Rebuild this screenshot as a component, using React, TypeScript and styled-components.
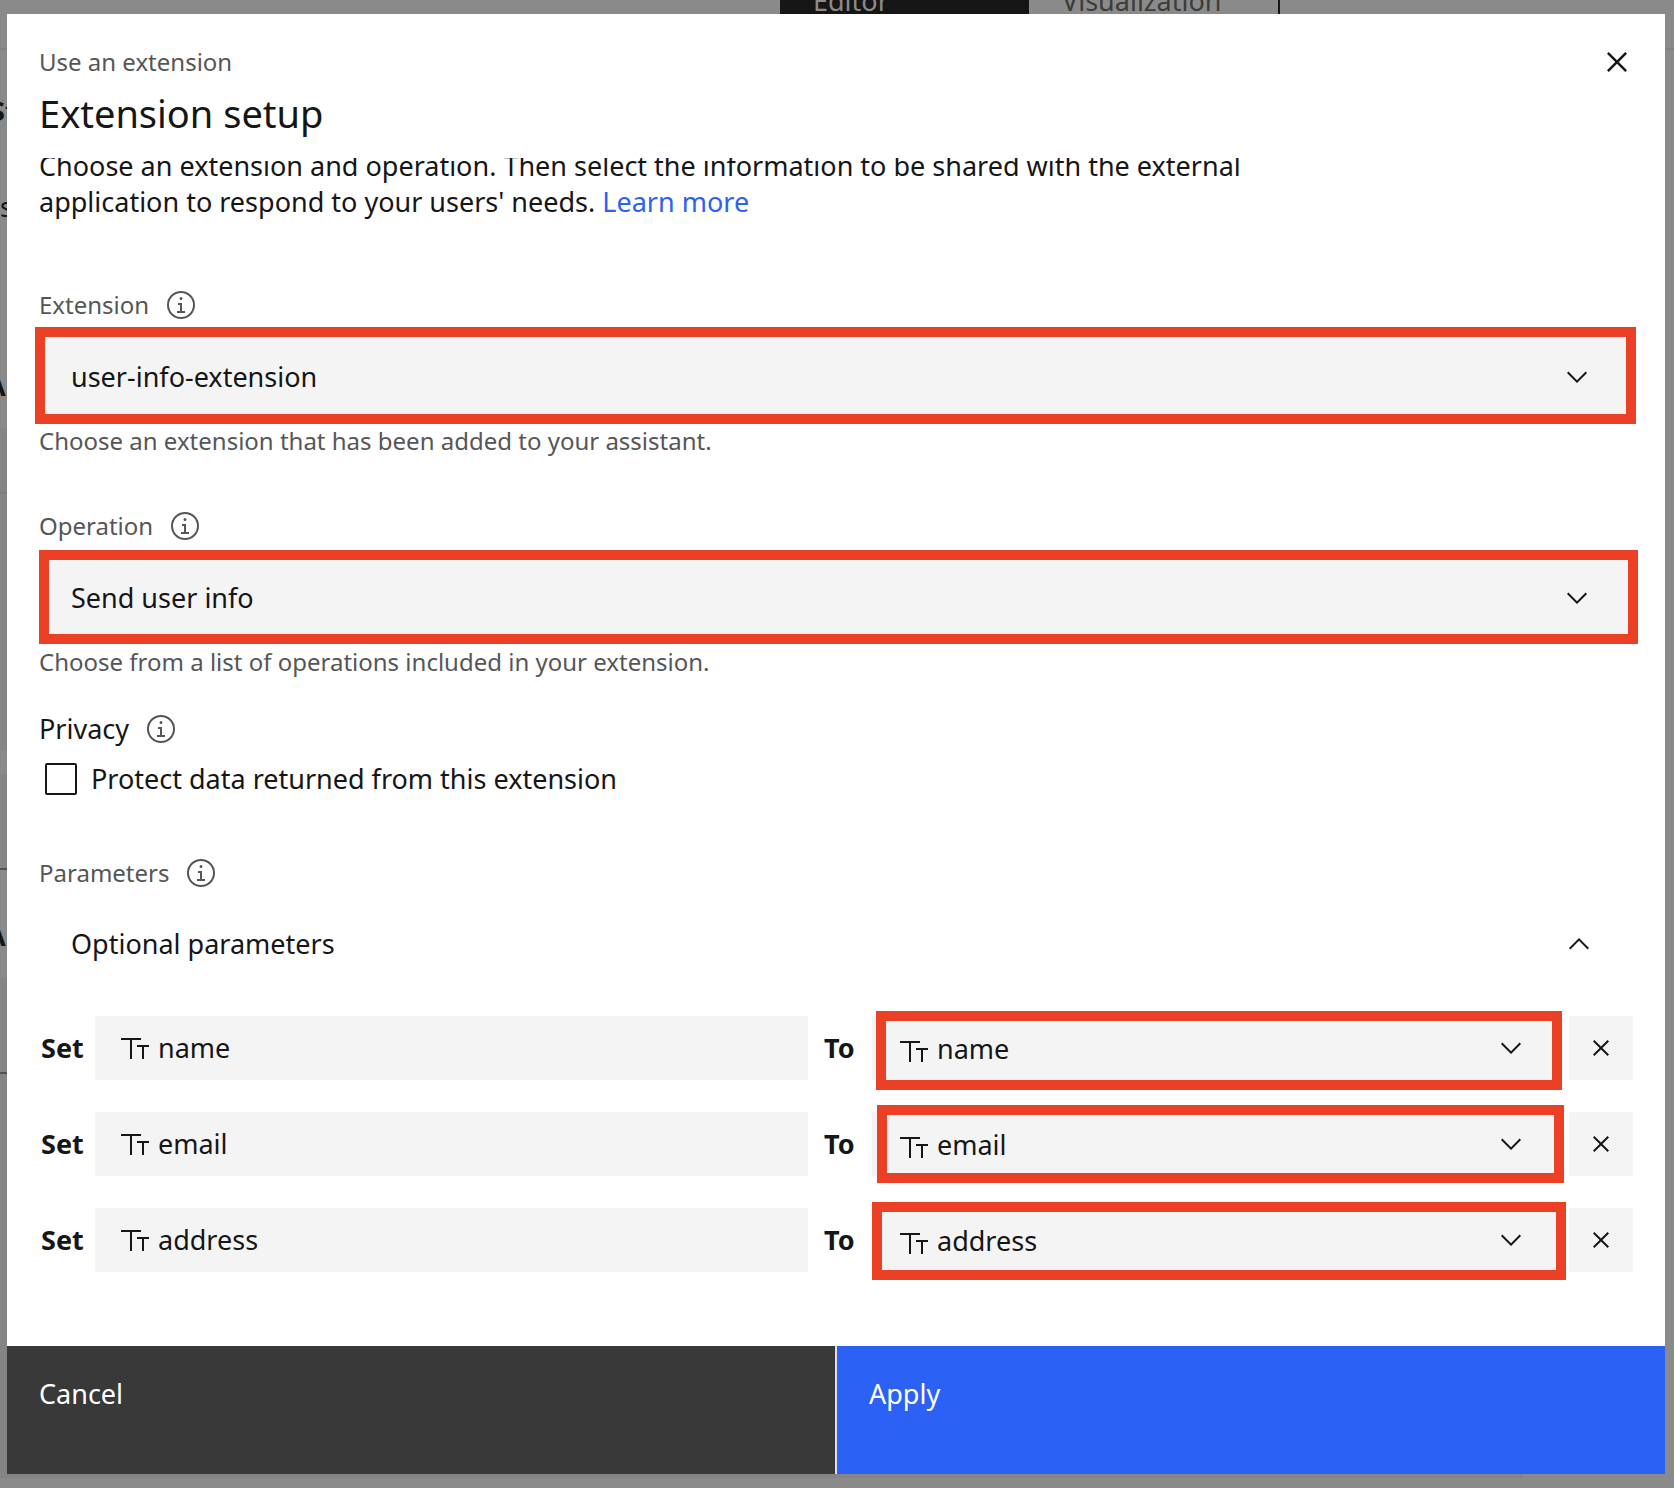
import React, { useState } from "react";
import styled, { createGlobalStyle } from "styled-components";

const color = {
  text: "#161616",
  muted: "#565656",
  field: "#f4f4f4",
  link: "#2c61f6",
  dark: "#393939",
  highlight: "#eb4026",
  backdrop: "#8a8a8a",
  backdropAlt: "#858585",
};

const GlobalStyle = createGlobalStyle`
  *, *::before, *::after { box-sizing: border-box; }
  body {
    margin: 0;
    background: ${color.backdrop};
    color: ${color.text};
    font-family: "Noto Sans", "Open Sans", sans-serif;
    font-size: 27px;
    line-height: 36px;
  }
  button, input, select { font: inherit; color: inherit; border: 0; border-radius: 0; margin: 0; }
  button { background: none; padding: 0; cursor: pointer; }
  h1, h2, p { margin: 0; font-size: inherit; font-weight: 400; }
`;

/* ---------- Icons ---------- */

const Svg = styled.svg<{ $size: number }>`
  display: block;
  flex: none;
  width: ${(p) => p.$size}px;
  height: ${(p) => p.$size}px;
  fill: currentColor;
`;

type IconProps = { size?: number };

const CloseIcon = ({ size = 32 }: IconProps) => (
  <Svg $size={size} viewBox="0 0 32 32" aria-hidden="true">
    <path d="M17.414 16 24 9.414 22.586 8 16 14.586 9.414 8 8 9.414 14.586 16 8 22.586 9.414 24 16 17.414 22.586 24 24 22.586z" />
  </Svg>
);

const ChevronDown = ({ size = 32 }: IconProps) => (
  <Svg $size={size} viewBox="0 0 32 32" aria-hidden="true">
    <path d="M16 22 6 12l1.4-1.4 8.6 8.6 8.6-8.6L26 12z" />
  </Svg>
);

const ChevronUp = ({ size = 32 }: IconProps) => (
  <Svg $size={size} viewBox="0 0 32 32" aria-hidden="true">
    <path d="m16 10 10 10-1.4 1.4-8.6-8.6-8.6 8.6L6 20z" />
  </Svg>
);

const TextIcon = ({ size = 32 }: IconProps) => (
  <Svg $size={size} viewBox="0 0 32 32" aria-hidden="true">
    <path d="M23 27V15h-5v-2h12v2h-5v12zM11 27V8H2V6h20v2h-9v19z" />
  </Svg>
);

const InfoIcon = ({ size = 32 }: IconProps) => (
  <Svg $size={size} viewBox="0 0 32 32" aria-hidden="true">
    <path d="M17 22v-8h-4v2h2v6h-3v2h8v-2zM16 8a1.5 1.5 0 1 0 1.5 1.5A1.5 1.5 0 0 0 16 8z" />
    <path d="M16 30a14 14 0 1 1 14-14 14 14 0 0 1-14 14zm0-26a12 12 0 1 0 12 12A12 12 0 0 0 16 4z" />
  </Svg>
);

/* ---------- Dimmed page behind the dialog ---------- */

const Screen = styled.div`
  position: relative;
  min-height: 100vh;
  padding: 14px 9px 14px 7px;
`;

const DimmedPage = styled.div`
  position: absolute;
  inset: 0;
  overflow: hidden;
`;

const TopBar = styled.div`
  display: flex;
  height: 50px;
  padding-left: 780px;
  border-bottom: 2px solid #808080;
`;

const Tab = styled.div<{ $active?: boolean }>`
  height: 14px;
  width: ${(p) => (p.$active ? 249 : 251)}px;
  padding-left: 33px;
  line-height: 1px;
  background: ${(p) => (p.$active ? color.text : "transparent")};
  color: ${(p) => (p.$active ? "#8b8b8b" : "#3c3c3c")};
  border-right: ${(p) => (p.$active ? "0" : `2px solid ${color.text}`)};
`;

const Band = styled.div<{ $height: number; $alt?: boolean; $line?: string; $pad?: number }>`
  width: 91%;
  height: ${(p) => p.$height}px;
  padding-top: ${(p) => p.$pad ?? 0}px;
  background: ${(p) => (p.$alt ? color.backdropAlt : color.backdrop)};
  border-bottom: ${(p) => (p.$line ? `2px solid ${p.$line}` : "0")};
`;

const BandText = styled.div<{ $indent: number; $bold?: boolean; $gap?: number }>`
  margin-bottom: ${(p) => p.$gap ?? 0}px;
  text-indent: ${(p) => p.$indent}px;
  font-weight: ${(p) => (p.$bold ? 700 : 400)};
`;

/* ---------- Dialog ---------- */

const Dialog = styled.section`
  position: relative;
  display: flex;
  flex-direction: column;
  background: #fff;
`;

const Header = styled.header`
  display: flex;
  justify-content: space-between;
  align-items: flex-start;
  padding: 24px 24px 22px 32px;
`;

const Titles = styled.div`
  display: grid;
  gap: 12px;
  padding-top: 8px;
`;

const Eyebrow = styled.p`
  color: ${color.muted};
  font-size: 24px;
  line-height: 32px;
`;

const Title = styled.h1`
  font-size: 38px;
  line-height: 46px;
`;

const CloseButton = styled.button`
  display: grid;
  place-items: center;
  width: 48px;
  height: 48px;
`;

const Body = styled.div`
  overflow: hidden;
  padding: 0 32px 74px;
`;

/* The body is scrolled slightly, so the first line sits partly under the header. */
const Description = styled.p`
  max-width: 1240px;
  margin: -10px 0 69px;
`;

const Link = styled.a`
  color: ${color.link};
  text-decoration: none;
`;

const Fields = styled.div`
  display: grid;
  gap: 53px;
  margin-bottom: 35px;
`;

const LabelRow = styled.div`
  display: flex;
  align-items: center;
  gap: 16px;
  height: 32px;
  color: ${color.muted};
  font-size: 24px;
  line-height: 32px;
`;

const SectionRow = styled(LabelRow)`
  color: ${color.text};
  font-size: 27px;
`;

const InfoButton = styled.button`
  color: ${color.muted};
`;

const Control = styled.div<{ $spaced?: boolean }>`
  position: relative;
  margin-top: ${(p) => (p.$spaced ? 16 : 0)}px;
`;

const Select = styled.select<{ $compact?: boolean }>`
  display: block;
  appearance: none;
  width: 100%;
  height: ${(p) => (p.$compact ? 64 : 80)}px;
  padding: ${(p) => (p.$compact ? "2px 72px 0 65px" : "0 72px 0 32px")};
  background: ${color.field};
  cursor: pointer;
`;

const TextInput = styled.input`
  display: block;
  width: 100%;
  height: 64px;
  padding: 0 16px 2px 63px;
  background: ${color.field};
  outline: 0;
`;

const Adornment = styled.span<{ $left?: number; $right?: number; $top?: number }>`
  position: absolute;
  top: ${(p) => p.$top ?? 0}px;
  bottom: 0;
  left: ${(p) => (p.$left === undefined ? "auto" : `${p.$left}px`)};
  right: ${(p) => (p.$right === undefined ? "auto" : `${p.$right}px`)};
  display: flex;
  align-items: center;
  pointer-events: none;
`;

const Highlight = styled.span<{ $inset: string }>`
  position: absolute;
  inset: ${(p) => p.$inset};
  border: 10px solid ${color.highlight};
  pointer-events: none;
`;

const HelpText = styled.p`
  margin-top: 8px;
  color: ${color.muted};
  font-size: 24px;
  line-height: 32px;
`;

const CheckLabel = styled.label`
  display: flex;
  align-items: center;
  gap: 14px;
  width: fit-content;
  margin: 18px 0 62px 6px;
  line-height: 32px;
  cursor: pointer;
`;

const Checkbox = styled.input`
  appearance: none;
  width: 32px;
  height: 32px;
  border: 2px solid ${color.text};
  border-radius: 2px;

  &:checked { background: ${color.text}; box-shadow: inset 0 0 0 4px #fff; }
`;

const Accordion = styled.button`
  display: flex;
  align-items: center;
  justify-content: space-between;
  width: 100%;
  height: 64px;
  margin: 23px 0 40px;
  padding: 0 38px 0 32px;
`;

const Rows = styled.div`
  display: grid;
  gap: 32px;
`;

const Row = styled.div`
  display: grid;
  grid-template-columns: 56px minmax(0, 713fr) 64px minmax(0, 689fr) 72px;
  align-items: center;
`;

const Word = styled.span<{ $pad: number }>`
  padding-left: ${(p) => p.$pad}px;
  font-weight: 700;
`;

const RemoveButton = styled.button`
  display: grid;
  place-items: center;
  justify-self: end;
  width: 64px;
  height: 64px;
  background: ${color.field};
`;

const Footer = styled.footer`
  display: grid;
  grid-template-columns: 1fr 1fr;
  gap: 2px;
  background: #e0e0e0;
`;

const FooterButton = styled.button<{ $primary?: boolean }>`
  height: 128px;
  padding: 30px 32px 62px;
  background: ${(p) => (p.$primary ? color.link : color.dark)};
  color: #fff;
  text-align: left;
`;

/* ---------- Content ---------- */

const fields = [
  {
    id: "extension",
    label: "Extension",
    value: "user-info-extension",
    help: "Choose an extension that has been added to your assistant.",
    inset: "-10px -3px -7px -4px",
  },
  {
    id: "operation",
    label: "Operation",
    value: "Send user info",
    help: "Choose from a list of operations included in your extension.",
    inset: "-8px -5px -6px 0",
  },
];

const parameters = [
  { name: "name", inset: "-5px -1px -10px 4px" },
  { name: "email", inset: "-7px -3px -7px 5px" },
  { name: "address", inset: "-6px -5px -8px 0" },
];

const Info = ({ about }: { about: string }) => (
  <InfoButton type="button" aria-label={`About ${about}`}>
    <InfoIcon />
  </InfoButton>
);

export default function App() {
  const [open, setOpen] = useState(true);

  return (
    <>
      <GlobalStyle />
      <Screen>
        <DimmedPage aria-hidden="true">
          <TopBar>
            <Tab $active>Editor</Tab>
            <Tab>Visualization</Tab>
          </TopBar>
          <Band $height={378} $pad={43}>
            <BandText $indent={-10} $bold $gap={60}>St</BandText>
            <BandText $indent={0} $gap={143}>s</BandText>
            <BandText $indent={-13} $bold>A</BandText>
          </Band>
          <Band $height={66} $alt $line="#7c7c7c" />
          <Band $height={256} $alt />
          <Band $height={24} />
          <Band $height={96} $alt $line="#525252" />
          <Band $height={108} $pad={48}>
            <BandText $indent={-13} $bold>A</BandText>
          </Band>
          <Band $height={96} $alt $line="#525252" />
          <Band $height={404} $alt />
        </DimmedPage>

        <Dialog role="dialog" aria-labelledby="dialog-title">
          <Header>
            <Titles>
              <Eyebrow>Use an extension</Eyebrow>
              <Title id="dialog-title">Extension setup</Title>
            </Titles>
            <CloseButton type="button" aria-label="Close">
              <CloseIcon size={40} />
            </CloseButton>
          </Header>

          <Body>
            <Description>
              Choose an extension and operation. Then select the information to be shared with the
              external application to respond to your users' needs. <Link href="#">Learn more</Link>
            </Description>

            <Fields>
              {fields.map((f) => (
                <div key={f.id}>
                  <LabelRow>
                    <label htmlFor={f.id}>{f.label}</label>
                    <Info about={f.label} />
                  </LabelRow>
                  <Control $spaced>
                    <Select id={f.id} defaultValue={f.value}>
                      <option>{f.value}</option>
                    </Select>
                    <Adornment $right={40}>
                      <ChevronDown />
                    </Adornment>
                    <Highlight $inset={f.inset} />
                  </Control>
                  <HelpText>{f.help}</HelpText>
                </div>
              ))}
            </Fields>

            <SectionRow>
              <h2>Privacy</h2>
              <Info about="Privacy" />
            </SectionRow>
            <CheckLabel>
              <Checkbox type="checkbox" />
              Protect data returned from this extension
            </CheckLabel>

            <LabelRow>
              <h2>Parameters</h2>
              <Info about="Parameters" />
            </LabelRow>
            <Accordion type="button" aria-expanded={open} onClick={() => setOpen(!open)}>
              Optional parameters
              {open ? <ChevronUp /> : <ChevronDown />}
            </Accordion>

            {open && (
              <Rows>
                {parameters.map((p) => (
                  <Row key={p.name}>
                    <Word $pad={2}>Set</Word>
                    <Control>
                      <TextInput readOnly value={p.name} aria-label={`Parameter ${p.name}`} />
                      <Adornment $left={24}>
                        <TextIcon />
                      </Adornment>
                    </Control>
                    <Word $pad={16}>To</Word>
                    <Control>
                      <Select $compact defaultValue={p.name} aria-label={`Value for ${p.name}`}>
                        <option>{p.name}</option>
                      </Select>
                      <Adornment $left={26} $top={6}>
                        <TextIcon />
                      </Adornment>
                      <Adornment $right={34}>
                        <ChevronDown />
                      </Adornment>
                      <Highlight $inset={p.inset} />
                    </Control>
                    <RemoveButton type="button" aria-label={`Remove ${p.name}`}>
                      <CloseIcon />
                    </RemoveButton>
                  </Row>
                ))}
              </Rows>
            )}
          </Body>

          <Footer>
            <FooterButton type="button">Cancel</FooterButton>
            <FooterButton type="button" $primary>Apply</FooterButton>
          </Footer>
        </Dialog>
      </Screen>
    </>
  );
}
